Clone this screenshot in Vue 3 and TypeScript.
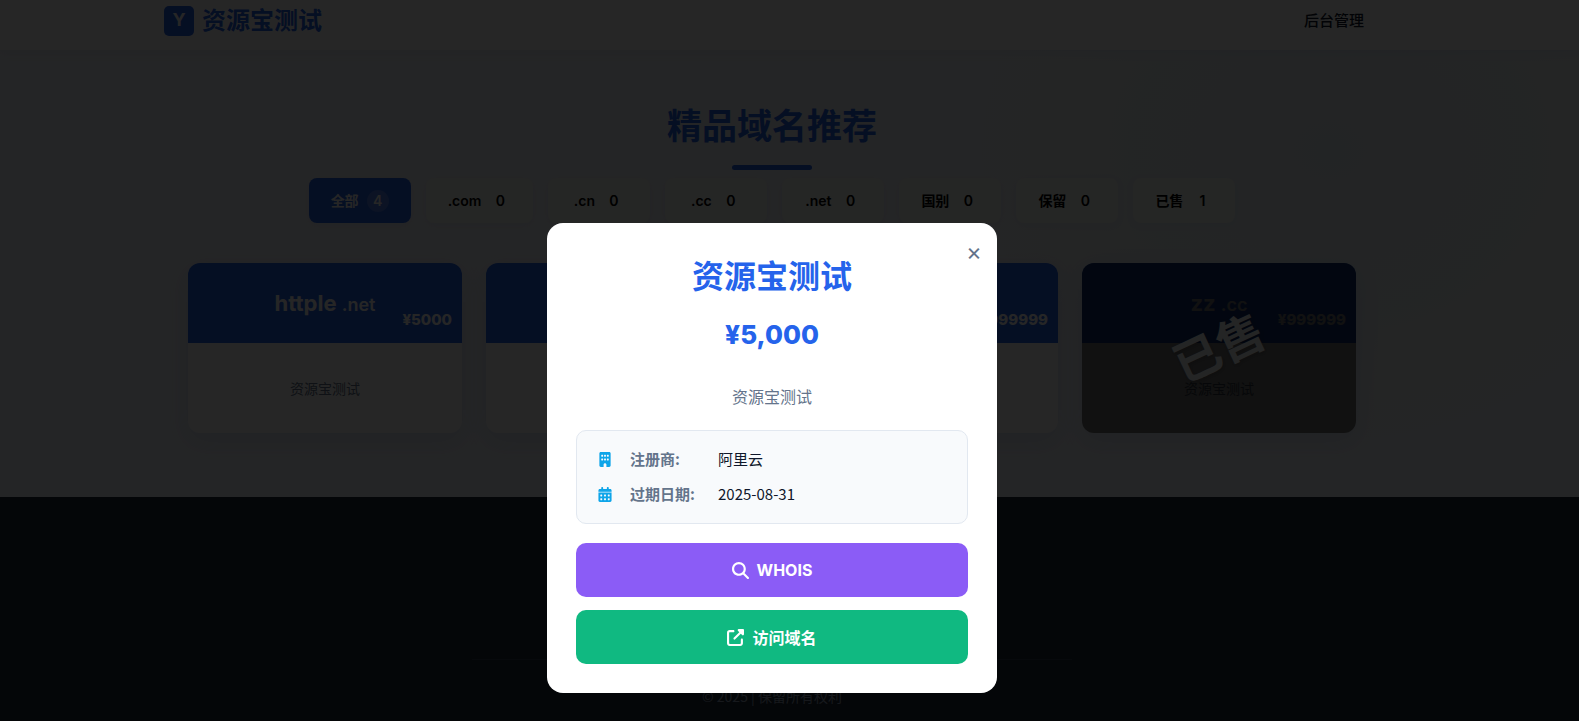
<script setup lang="ts">
import { ref } from 'vue'

interface Filter {
  label: string
  count: number
}

interface DomainCard {
  name: string
  suffix: string
  price: string
  description: string
  sold: boolean
}

const filters: Filter[] = [
  { label: '全部', count: 4 },
  { label: '.com', count: 0 },
  { label: '.cn', count: 0 },
  { label: '.cc', count: 0 },
  { label: '.net', count: 0 },
  { label: '国别', count: 0 },
  { label: '保留', count: 0 },
  { label: '已售', count: 1 },
]

const cards: DomainCard[] = [
  { name: 'httple', suffix: '.net', price: '¥5000', description: '资源宝测试', sold: false },
  { name: '', suffix: '', price: '', description: '', sold: false },
  { name: '', suffix: '', price: '¥999999', description: '', sold: false },
  { name: 'zz', suffix: '.cc', price: '¥999999', description: '资源宝测试', sold: true },
]

const activeFilter = ref('全部')
const modalOpen = ref(true)
</script>

<template>
  <div class="page">
    <header class="site-header">
      <div class="header-inner">
        <a class="brand" href="#">
          <span class="brand-mark">Y</span>
          <span class="brand-name">资源宝测试</span>
        </a>
        <nav><a class="nav-link" href="#admin">后台管理</a></nav>
      </div>
    </header>

    <main class="content">
      <h1 class="page-title">精品域名推荐</h1>
      <div class="filters">
        <button
          v-for="f in filters"
          :key="f.label"
          type="button"
          class="filter"
          :class="{ active: f.label === activeFilter }"
          @click="activeFilter = f.label"
        >
          <span>{{ f.label }}</span>
          <span class="count">{{ f.count }}</span>
        </button>
      </div>

      <section class="cards">
        <article v-for="(c, i) in cards" :key="i" class="card">
          <div class="card-head">
            <h2 v-if="c.name" class="card-name">{{ c.name }} <small>{{ c.suffix }}</small></h2>
            <span v-if="c.price" class="card-price">{{ c.price }}</span>
          </div>
          <div class="card-body">{{ c.description }}</div>
          <div v-if="c.sold" class="sold"><span>已售</span></div>
        </article>
      </section>
    </main>

    <footer class="site-footer">
      <p class="copyright">© 2025 | 保留所有权利</p>
    </footer>

    <div v-if="modalOpen" class="overlay">
      <div class="modal" role="dialog" aria-modal="true" aria-labelledby="modal-title">
        <button type="button" class="close" aria-label="关闭" @click="modalOpen = false">×</button>
        <h2 id="modal-title" class="modal-title">资源宝测试</h2>
        <p class="modal-price">¥5,000</p>
        <p class="modal-desc">资源宝测试</p>
        <dl class="info">
          <div class="info-row">
            <svg class="info-icon" viewBox="0 0 384 512" aria-hidden="true">
              <path
                fill-rule="evenodd"
                d="M48 0C21.500 0 0 21.500 0 48v416c0 26.500 21.500 48 48 48h96v-80c0-26.500 21.500-48 48-48s48 21.500 48 48v80h96c26.500 0 48-21.500 48-48V48c0-26.500-21.500-48-48-48H48zM64 240c0-8.800 7.200-16 16-16h32c8.800 0 16 7.200 16 16v32c0 8.800-7.200 16-16 16H80c-8.800 0-16-7.200-16-16v-32zm112-16h32c8.800 0 16 7.200 16 16v32c0 8.800-7.200 16-16 16h-32c-8.800 0-16-7.200-16-16v-32c0-8.800 7.200-16 16-16zm80 16c0-8.800 7.200-16 16-16h32c8.800 0 16 7.200 16 16v32c0 8.800-7.200 16-16 16h-32c-8.800 0-16-7.200-16-16v-32zM80 96h32c8.800 0 16 7.200 16 16v32c0 8.800-7.200 16-16 16H80c-8.800 0-16-7.200-16-16v-32c0-8.800 7.200-16 16-16zm80 16c0-8.800 7.200-16 16-16h32c8.800 0 16 7.200 16 16v32c0 8.800-7.200 16-16 16h-32c-8.800 0-16-7.200-16-16v-32zm112-16h32c8.800 0 16 7.200 16 16v32c0 8.800-7.200 16-16 16h-32c-8.800 0-16-7.200-16-16v-32c0-8.800 7.200-16 16-16z"
              />
            </svg>
            <dt>注册商:</dt>
            <dd>阿里云</dd>
          </div>
          <div class="info-row">
            <svg class="info-icon" viewBox="0 0 448 512" aria-hidden="true">
              <path
                d="M128 0c17.700 0 32 14.300 32 32v32h128V32c0-17.700 14.300-32 32-32s32 14.300 32 32v32h48c26.500 0 48 21.500 48 48v48H0v-48c0-26.500 21.500-48 48-48h48V32c0-17.700 14.300-32 32-32z"
              />
              <path
                fill-rule="evenodd"
                d="M0 192h448v272c0 26.500-21.500 48-48 48H48c-26.500 0-48-21.500-48-48V192zm64 80v32c0 8.800 7.200 16 16 16h32c8.800 0 16-7.200 16-16v-32c0-8.800-7.200-16-16-16H80c-8.800 0-16 7.200-16 16zm128 0v32c0 8.800 7.200 16 16 16h32c8.800 0 16-7.200 16-16v-32c0-8.800-7.200-16-16-16h-32c-8.800 0-16 7.200-16 16zm144-16c-8.800 0-16 7.200-16 16v32c0 8.800 7.200 16 16 16h32c8.800 0 16-7.200 16-16v-32c0-8.800-7.200-16-16-16h-32zM64 400v32c0 8.800 7.200 16 16 16h32c8.800 0 16-7.200 16-16v-32c0-8.800-7.200-16-16-16H80c-8.800 0-16 7.200-16 16zm144-16c-8.800 0-16 7.200-16 16v32c0 8.800 7.200 16 16 16h32c8.800 0 16-7.200 16-16v-32c0-8.800-7.200-16-16-16h-32zm112 16v32c0 8.800 7.200 16 16 16h32c8.800 0 16-7.200 16-16v-32c0-8.800-7.200-16-16-16h-32c-8.800 0-16 7.200-16 16z"
              />
              <path class="icon-band" d="M0 160h448v32H0z" />
            </svg>
            <dt>过期日期:</dt>
            <dd>2025-08-31</dd>
          </div>
        </dl>
        <div class="actions">
          <a class="action whois" href="#whois">
            <svg class="action-icon" viewBox="0 0 512 512" aria-hidden="true">
              <path
                d="M416 208c0 45.900-14.900 88.300-40 122.700l126.600 126.700c12.500 12.500 12.500 32.800 0 45.300s-32.800 12.500-45.300 0L330.700 376c-34.400 25.200-76.800 40-122.700 40C93.100 416 0 322.900 0 208S93.100 0 208 0s208 93.100 208 208zM208 352a144 144 0 1 0 0-288 144 144 0 1 0 0 288z"
              />
            </svg>
            <span>WHOIS</span>
          </a>
          <a class="action visit" href="#visit">
            <svg class="action-icon" viewBox="0 0 512 512" aria-hidden="true">
              <path
                d="M352 0c-12.900 0-24.600 7.800-29.600 19.800s-2.200 25.700 6.900 34.900L370.700 96 201.400 265.400c-12.500 12.500-12.500 32.800 0 45.300s32.800 12.500 45.300 0L416 141.300l41.400 41.400c9.200 9.200 22.900 11.900 34.900 6.900S512 172.900 512 160V32c0-17.700-14.300-32-32-32H352zM80 32C35.800 32 0 67.800 0 112v320c0 44.200 35.800 80 80 80h320c44.200 0 80-35.800 80-80V320c0-17.700-14.300-32-32-32s-32 14.300-32 32v112c0 8.800-7.200 16-16 16H80c-8.800 0-16-7.200-16-16V112c0-8.800 7.200-16 16-16h112c17.700 0 32-14.300 32-32s-14.300-32-32-32H80z"
              />
            </svg>
            <span>访问域名</span>
          </a>
        </div>
      </div>
    </div>
  </div>
</template>

<style>
body {
  margin: 0;
  background: #f8fafc;
}
</style>

<style scoped>
.page {
  --blue: #2563eb;
  --gutter: 35px;
  box-sizing: border-box;
  min-height: 100vh;
  display: flex;
  flex-direction: column;
  font-family: Inter, "Noto Sans CJK SC", sans-serif;
  color: #0f172a;
  background: radial-gradient(ellipse 360px 300px at 1330px 150px, rgba(14, 165, 150, 0.06), transparent), #f2f5fa;
}
.page *,
.page *::before {
  box-sizing: border-box;
}
a {
  color: inherit;
  text-decoration: none;
}
h1,
h2,
p,
dl,
dd {
  margin: 0;
}
button {
  font: inherit;
  cursor: pointer;
}

.site-header {
  padding: 6px 51px 14px 0;
  background: #fff;
  box-shadow: 0 2px 10px rgba(37, 99, 235, 0.08);
}
.header-inner {
  max-width: 1200px;
  margin: 0 auto;
  display: flex;
  align-items: center;
  justify-content: space-between;
}
.brand {
  display: flex;
  align-items: center;
  gap: 8px;
  height: 30px;
  color: var(--blue);
  font-size: 24px;
  font-weight: 700;
  line-height: 30px;
}
.brand-mark {
  width: 30px;
  height: 30px;
  border-radius: 5px;
  background: var(--blue);
  color: #fff;
  font-size: 18px;
  line-height: 28px;
  text-align: center;
}
.nav-link {
  font-size: 15px;
  font-weight: 500;
  line-height: 30px;
}

.content {
  padding: 50px var(--gutter) 64px 0;
}
.page-title {
  display: flex;
  flex-direction: column;
  align-items: center;
  gap: 13px;
  color: var(--blue);
  font-size: 35px;
  font-weight: 700;
  line-height: 52px;
}
.page-title::after {
  content: "";
  width: 80px;
  height: 5px;
  border-radius: 3px;
  background: var(--blue);
}
.filters {
  display: flex;
  justify-content: center;
  gap: 15px;
  margin-top: 8px;
}
.filter {
  display: flex;
  align-items: center;
  justify-content: center;
  gap: 8px;
  min-width: 102px;
  height: 45px;
  padding: 0 22px;
  border: 0;
  border-radius: 8px;
  background: #f8faf5;
  color: #000;
  font-size: 14px;
  font-weight: 600;
  line-height: 22px;
  box-shadow: 0 2px 8px rgba(37, 99, 235, 0.06);
}
.count {
  width: 22px;
  height: 22px;
  border-radius: 50%;
  text-align: center;
}
.filter.active {
  background: var(--blue);
  color: #fff;
}
.filter.active .count {
  background: rgba(255, 255, 255, 0.2);
}
.cards {
  display: grid;
  grid-template-columns: repeat(4, 1fr);
  gap: 24px;
  max-width: 1168px;
  margin: 40px auto 0;
}
.card {
  position: relative;
  overflow: hidden;
  border-radius: 12px;
  background: #fff;
  box-shadow: 0 8px 24px rgba(37, 99, 235, 0.12);
}
.card-head {
  position: relative;
  display: flex;
  align-items: center;
  justify-content: center;
  height: 80px;
  padding-top: 2px;
  background: var(--blue);
  color: #fff;
}
.card-name {
  font-size: 22px;
  font-weight: 700;
  line-height: 30px;
}
.card-name small {
  font-size: 18px;
  font-weight: 600;
}
.card-price {
  position: absolute;
  right: 10px;
  bottom: 12px;
  font-size: 15px;
  font-weight: 800;
  line-height: 22px;
}
.card-body {
  display: flex;
  align-items: center;
  justify-content: center;
  height: 90px;
  color: #64748b;
  font-size: 14px;
}
.sold {
  position: absolute;
  inset: 0;
  display: flex;
  align-items: center;
  justify-content: center;
  background: rgba(0, 0, 0, 0.55);
  color: #f1f5f9;
  font-size: 47px;
  font-weight: 700;
  line-height: 60px;
}
.sold span {
  transform: rotate(-25deg);
  text-shadow: 0 2px 4px rgba(0, 0, 0, 0.2);
}

.site-footer {
  flex: 1;
  padding: 162px var(--gutter) 12px 0;
  background: #1e293b;
  color: #94a3b8;
}
.copyright {
  max-width: 600px;
  margin: 0 auto;
  padding-top: 24px;
  border-top: 1px solid rgba(255, 255, 255, 0.1);
  font-family: "Noto Sans CJK SC", sans-serif;
  font-size: 14px;
  line-height: 24px;
  text-align: center;
}

.overlay {
  position: fixed;
  inset: 0;
  display: flex;
  align-items: flex-end;
  justify-content: center;
  padding: 0 var(--gutter) 28px 0;
  background: rgba(0, 0, 0, 0.85);
}
.modal {
  position: relative;
  width: 450px;
  padding: 34px 29px 29px;
  border-radius: 16px;
  background: #fff;
  text-align: center;
}
.close {
  position: absolute;
  top: 14px;
  right: 8px;
  width: 30px;
  height: 30px;
  padding: 0;
  border: 0;
  background: none;
  color: #64748b;
  font-size: 24px;
  font-weight: 400;
  line-height: 30px;
}
.modal-title {
  color: var(--blue);
  font-size: 32px;
  font-weight: 700;
  line-height: 40px;
}
.modal-price {
  margin-top: 22px;
  color: var(--blue);
  font-size: 26px;
  font-weight: 800;
  line-height: 32px;
}
.modal-desc {
  margin-top: 34px;
  color: #64748b;
  font-size: 16px;
  line-height: 24px;
}
.info {
  display: grid;
  gap: 11px;
  margin-top: 21px;
  padding: 16px 20px 17px;
  border: 1px solid #e2e8f0;
  border-radius: 10px;
  background: #f8fafc;
  font-family: "Noto Sans CJK SC", sans-serif;
  font-size: 15px;
  line-height: 24px;
  text-align: left;
}
.info-row {
  display: grid;
  grid-template-columns: 16px 75px 1fr;
  column-gap: 15px;
  align-items: center;
}
.info-row dt {
  margin-left: 2px;
  color: #64748b;
  font-weight: 600;
  white-space: nowrap;
}
.info-icon {
  width: 16px;
  height: 15px;
  fill: #0ea5e9;
}
.icon-band {
  opacity: 0.55;
}
.actions {
  display: grid;
  gap: 13px;
  margin-top: 19px;
}
.action {
  display: flex;
  align-items: center;
  justify-content: center;
  gap: 8px;
  height: 54px;
  border-radius: 10px;
  color: #fff;
  font-size: 16px;
  font-weight: 700;
}
.whois {
  background: #8b5cf6;
}
.visit {
  background: #10b981;
}
.action-icon {
  width: 17px;
  height: 17px;
  fill: currentColor;
}
</style>
